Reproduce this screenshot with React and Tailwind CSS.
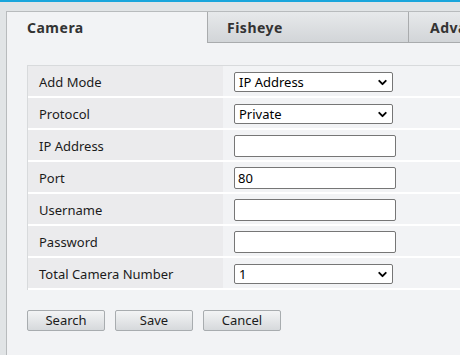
import { ChevronDown } from "lucide-react"

const rows = [
  { label: "Add Mode", type: "select", value: "IP Address" },
  { label: "Protocol", type: "select", value: "Private" },
  { label: "IP Address", type: "input", value: "" },
  { label: "Port", type: "input", value: "80" },
  { label: "Username", type: "input", value: "" },
  { label: "Password", type: "input", value: "" },
  { label: "Total Camera Number", type: "select", value: "1" },
]

function SelectBox({ value }) {
  return (
    <div className="relative w-[159px] h-[20px] bg-white border border-[#767676] rounded-[2px] flex items-center pl-[4px]">
      <span className="text-[13px] leading-none text-black">{value}</span>
      <ChevronDown className="absolute right-[3px] top-[3px] w-[13px] h-[13px] text-black" strokeWidth={3.5} />
    </div>
  )
}

function TextBox({ value }) {
  return (
    <div className="w-[162px] h-[22px] bg-white border border-[#767676] rounded-[2px] flex items-center pl-[3px]">
      <span className="text-[13px] leading-none text-black">{value}</span>
    </div>
  )
}

export default function App() {
  return (
    <div className="w-[460px] h-[355px] overflow-hidden bg-[#e1e4e6] font-['Noto_Sans',sans-serif] text-[#1b1b1b]">
      <div className="h-[2px] bg-[#1aa6dc]"></div>
      <div className="pt-[9px] pl-[6px]">
        <div className="w-[600px] h-[400px] bg-[#f2f3f5] border-l border-t border-[#b8bbbd]">
          {/* tabs */}
          <div className="flex h-[31px]">
            <div className="w-[200px] pl-[20px] flex items-center font-bold text-[14px] tracking-[0.5px] text-[#333]">
              Camera
            </div>
            <div className="w-[201px] pl-[19px] flex items-center font-bold text-[14px] tracking-[0.5px] text-[#333] bg-gradient-to-b from-[#e7e9eb] to-[#d2d5d8] border-l border-b border-[#a9abad]">
              Fisheye
            </div>
            <div className="flex-1 pl-[21px] flex items-center font-bold text-[14px] tracking-[0.5px] text-[#333] bg-gradient-to-b from-[#e7e9eb] to-[#d2d5d8] border-l border-b border-[#a9abad]">
              Advanced
            </div>
          </div>

          {/* form */}
          <div className="ml-[20px] mt-[22px] border-t border-l border-[#d8dadc]">
            {rows.map((row) => (
              <div key={row.label} className="flex h-[32px] border-b-2 border-white">
                <div className="w-[195px] bg-[#ebebed] pl-[11px] pt-[3px] flex items-center text-[13px]">
                  {row.label}
                </div>
                <div className="flex-1 pl-[11px] pt-[2px] flex items-center">
                  {row.type === "select" ? <SelectBox value={row.value} /> : <TextBox value={row.value} />}
                </div>
              </div>
            ))}
          </div>

          {/* buttons */}
          <div className="ml-[20px] mt-[20px] flex gap-[10px]">
            {["Search", "Save", "Cancel"].map((b) => (
              <button
                key={b}
                className="w-[78px] h-[21px] text-[13px] leading-none border border-[#a8acaf] rounded-[2px] bg-gradient-to-b from-[#f3f4f5] to-[#d6d9dc] text-[#1b1b1b]"
              >
                {b}
              </button>
            ))}
          </div>
        </div>
      </div>
    </div>
  )
}
